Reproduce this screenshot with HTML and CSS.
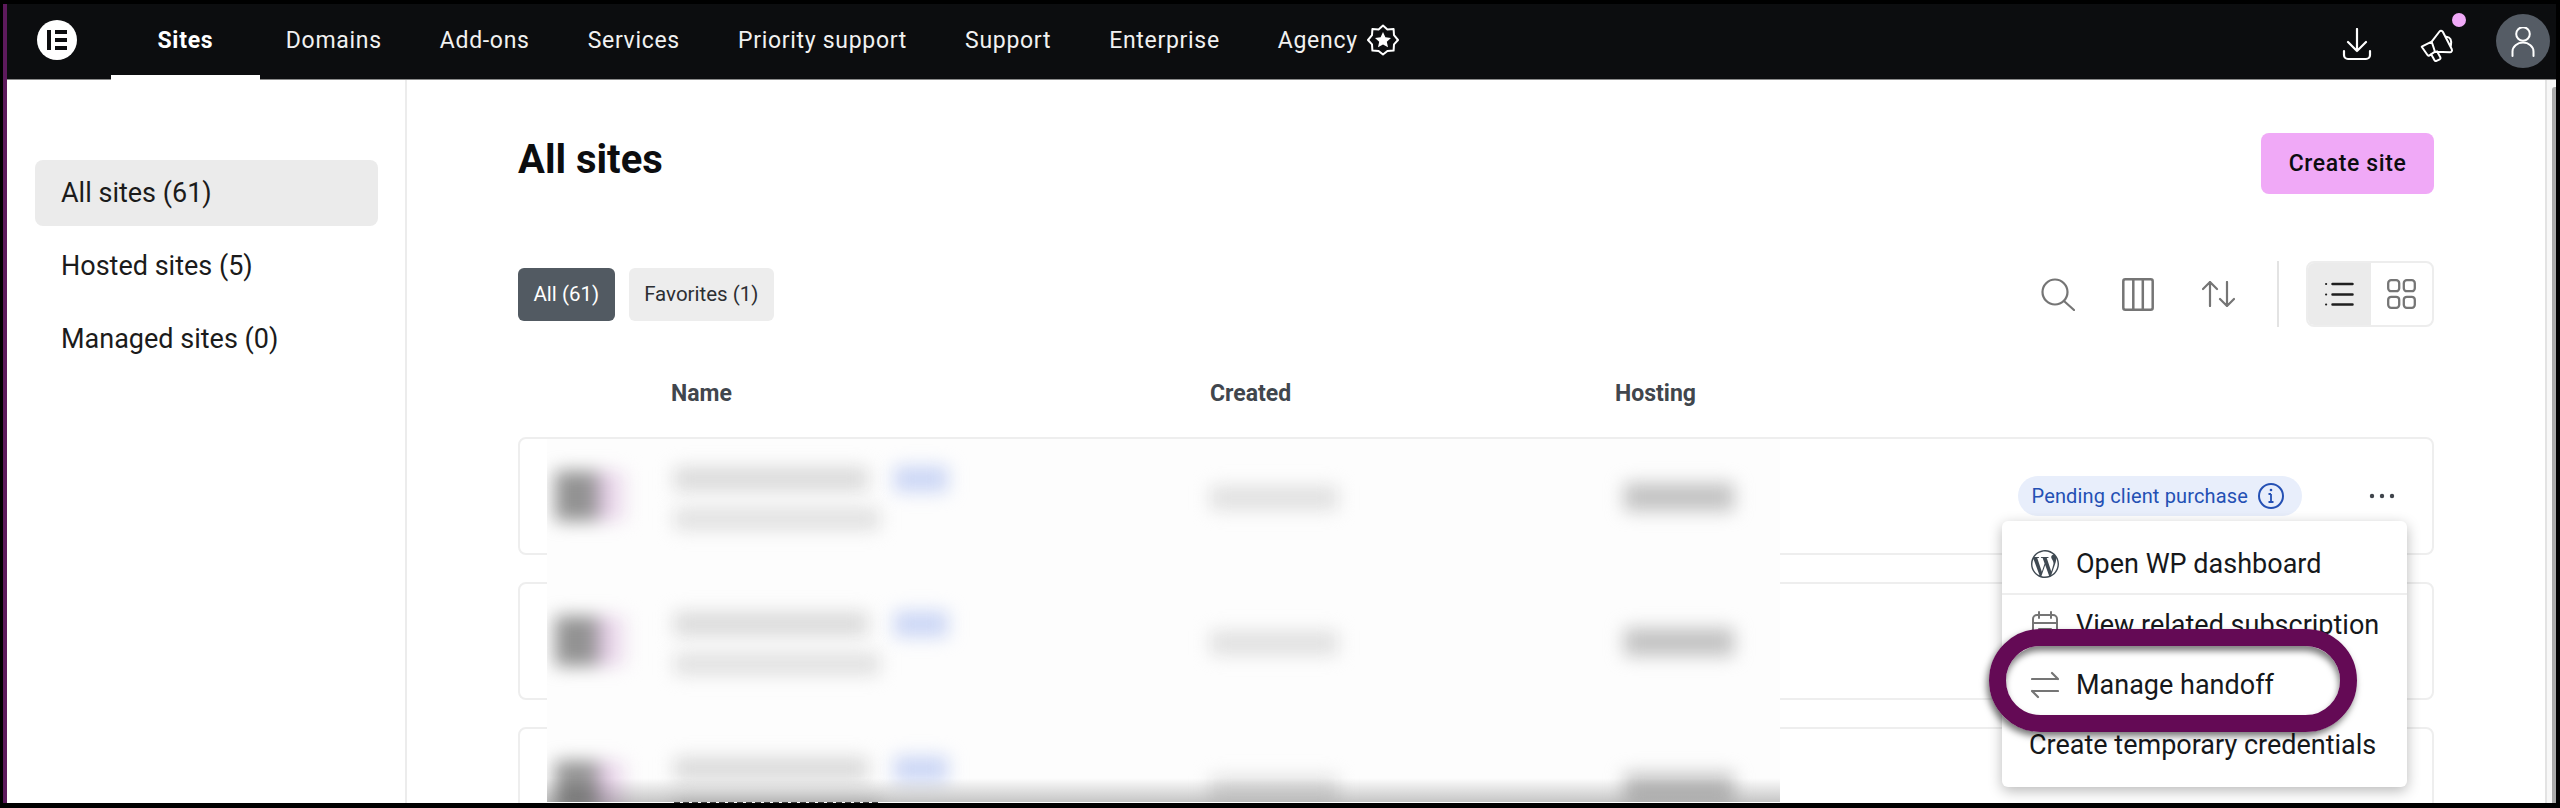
FILE: index.html
```html
<!DOCTYPE html>
<html lang="en">
<head>
<meta charset="utf-8">
<title>All sites</title>
<link rel="stylesheet" href="styles.css">
</head>
<body>
<div class="frame">
  <div class="window">
    <header class="nav">
      <svg class="logo" viewBox="0 0 40 40"><circle cx="20" cy="20" r="20" fill="#fff"/><path d="M10 10h4v20h-4zM18 10h12v4H18zM18 18h12v4H18zM18 26h12v4H18z" fill="#0c0d0f"/></svg>
      <nav class="tabs">
        <a class="tab active">Sites</a>
        <a class="tab">Domains</a>
        <a class="tab">Add-ons</a>
        <a class="tab">Services</a>
        <a class="tab">Priority support</a>
        <a class="tab">Support</a>
        <a class="tab">Enterprise</a>
        <a class="tab agency">Agency
          <svg class="star" viewBox="0 0 32 32"><path d="M16 1.500l4.400 3.900 6.200-.4.400 6.200 4 4.800-4 4.400-.4 6.200-6.200.4-4.400 3.500-4.400-3.500-6.200-.4-.4-6.200-4-4.400 4-4.800.4-6.200 6.200.4z" fill="none" stroke="#fff" stroke-width="2" stroke-linejoin="round"/><path d="M16 8l2.400 5.300 5.600.6-4.200 3.800 1.200 5.600-5-2.900-5 2.900 1.200-5.600L8 13.900l5.600-.6z" fill="#fff"/></svg>
        </a>
      </nav>
      <div class="nav-right">
        <svg class="ico-download" viewBox="0 0 31 33" fill="none" stroke="#fff" stroke-width="2.200" stroke-linecap="round" stroke-linejoin="round"><path d="M15 1v22M6 14l9 9 9-9M2 23v4a4 4 0 0 0 4 4h18a4 4 0 0 0 4-4v-4"/></svg>
        <span class="bell">
          <svg class="ico-mega" viewBox="0 0 36 36" fill="none" stroke="#fff" stroke-width="2" stroke-linecap="round" stroke-linejoin="round"><path d="M1.700 19.700L11.700 14.700 19.500 4.500c.8-1 2.600-.9 3.300.3l9 17.500c.6 1.300-.3 3-1.800 3L15 24.700 9.500 28.300c-.8.5-1.700.3-2.200-.5L1.700 19.700zM11.700 14.700L15 24.700M26.500 9.700c3.500.3 5.800 3.300 4.300 9.500M11 27l3.500 6.200c.4.800 1.300 1 2 .6l3.200-1.500c.8-.4 1-1.200.6-2L17 24.300"/></svg>
          <i class="dot"></i>
        </span>
        <span class="avatar">
          <svg viewBox="0 0 24 30" fill="none" stroke="#fff" stroke-width="2" stroke-linecap="round"><circle cx="12" cy="7" r="6.800"/><path d="M1.500 29v-4.500a10.500 9 0 0 1 21 0V29"/></svg>
        </span>
      </div>
    </header>
    <div class="body">
      <aside class="side">
        <a class="side-item current">All sites (61)</a>
        <a class="side-item">Hosted sites (5)</a>
        <a class="side-item">Managed sites (0)</a>
      </aside>
      <main class="main">
        <div class="head">
          <h1>All sites</h1>
          <button class="create">Create site</button>
        </div>
        <div class="toolbar">
          <div class="chips">
            <span class="chip on">All (61)</span>
            <span class="chip">Favorites (1)</span>
          </div>
          <div class="tools">
            <svg class="t-search" viewBox="0 0 34 33" fill="none" stroke="#757575" stroke-width="2.200" stroke-linecap="round"><circle cx="14" cy="14" r="12.500"/><path d="M23.500 23.500L33 32"/></svg>
            <svg class="t-cols" viewBox="0 0 32 33" fill="none" stroke="#757575" stroke-width="2.500" stroke-linejoin="round"><rect x="1.300" y="1.300" width="29.400" height="30.400" rx="2"/><path d="M11.300 1.300v30.400M20.800 1.300v30.400"/></svg>
            <svg class="t-sort" viewBox="0 0 33 26" fill="none" stroke="#757575" stroke-width="2.200" stroke-linecap="round" stroke-linejoin="round"><path d="M8 25V1M1 8l7-7 7 7M25 1v24M18 18l7 7 7-7"/></svg>
            <span class="sep"></span>
            <div class="toggle">
              <span class="seg on">
                <svg class="t-list" viewBox="0 0 29 24" fill="none" stroke="#1f1f1f" stroke-width="2.500" stroke-linecap="round"><path d="M7.500 2h20M7.500 12.500h20M7.500 22.500h20"/><path d="M1 2h.2M1 12.500h.2M1 22.500h.2" stroke-width="2"/></svg>
              </span>
              <span class="seg">
                <svg class="t-grid" viewBox="0 0 29 30" fill="none" stroke="#757575" stroke-width="2.300"><rect x="1.200" y="1.200" width="11" height="11" rx="3"/><rect x="16.800" y="1.200" width="11" height="11" rx="3"/><rect x="1.200" y="17.800" width="11" height="11" rx="3"/><rect x="16.800" y="17.800" width="11" height="11" rx="3"/></svg>
              </span>
            </div>
          </div>
        </div>
        <div class="thead">
          <span>Name</span>
          <span>Created</span>
          <span>Hosting</span>
        </div>
        <div class="rows">
          <div class="row">
            <span class="badge">Pending client purchase
              <svg class="info" viewBox="0 0 26 26" fill="none" stroke="#2450b4" stroke-width="2"><circle cx="13" cy="13" r="12"/><path d="M13 11v8M10.500 19h5M10.500 11H13" stroke-width="1.800"/><circle cx="13" cy="7" r="1.300" fill="#2450b4" stroke="none"/></svg>
            </span>
            <svg class="more" viewBox="0 0 44 8" fill="#3f444b"><circle cx="12" cy="4" r="2.200"/><circle cx="22" cy="4" r="2.200"/><circle cx="32" cy="4" r="2.200"/></svg>
          </div>
          <div class="row"></div>
          <div class="row"></div>
          <div class="blur-panel">
            <div class="blur-rows">
              <div class="blur-row">
                <i class="b-avatar"></i>
                <div class="b-name"><div class="b-title"><i class="b-t"></i><i class="b-tag"></i></div><i class="b-sub"></i></div>
                <i class="b-date"></i>
                <i class="b-host"></i>
              </div>
              <div class="blur-row">
                <i class="b-avatar"></i>
                <div class="b-name"><div class="b-title"><i class="b-t"></i><i class="b-tag"></i></div><i class="b-sub"></i></div>
                <i class="b-date"></i>
                <i class="b-host"></i>
              </div>
              <div class="blur-row">
                <i class="b-avatar"></i>
                <div class="b-name"><div class="b-title"><i class="b-t"></i><i class="b-tag"></i></div><i class="b-sub"></i></div>
                <i class="b-date"></i>
                <i class="b-host"></i>
              </div>
            </div>
            <div class="peek"></div>
          </div>
          <div class="menu">
            <div class="mi divided">
              <svg class="mi-ico" viewBox="0 0 24 24" fill="#3f4952"><path d="M21.469 6.825c.84 1.537 1.318 3.3 1.318 5.175 0 3.979-2.156 7.456-5.363 9.325l3.295-9.527c.615-1.54.82-2.771.82-3.864 0-.405-.026-.78-.07-1.11m-7.981.105c.647-.03 1.232-.105 1.232-.105.582-.075.514-.93-.067-.899 0 0-1.755.135-2.88.135-1.064 0-2.85-.15-2.85-.15-.585-.03-.661.855-.075.885 0 0 .54.061 1.125.09l1.68 4.605-2.37 7.08L5.354 6.9c.649-.03 1.234-.1 1.234-.1.585-.075.516-.93-.065-.896 0 0-1.746.138-2.874.138-.2 0-.438-.008-.69-.015C4.911 3.15 8.235 1.215 12 1.215c2.809 0 5.365 1.072 7.286 2.833-.046-.003-.091-.009-.141-.009-1.06 0-1.812.923-1.812 1.914 0 .89.513 1.643 1.06 2.531.411.72.89 1.643.89 2.977 0 .915-.354 1.994-.821 3.479l-1.075 3.585-3.9-11.61.001.014zM12 22.784c-1.059 0-2.081-.153-3.048-.437l3.237-9.406 3.315 9.087c.024.053.05.101.078.149-1.12.393-2.325.609-3.582.609M1.211 12c0-1.564.336-3.05.935-4.39L7.29 21.709C3.694 19.96 1.212 16.271 1.211 12M12 0C5.385 0 0 5.385 0 12s5.385 12 12 12 12-5.385 12-12S18.615 0 12 0"/></svg>
              <span>Open WP dashboard</span>
            </div>
            <div class="mi">
              <svg class="mi-ico" viewBox="0 0 28 28" fill="none" stroke="#757575" stroke-width="2" stroke-linecap="round"><rect x="2" y="4" width="24" height="22" rx="4"/><path d="M8 1v6M20 1v6M2 12h24M8 18h12"/></svg>
              <span>View related subscription</span>
            </div>
            <div class="mi">
              <svg class="mi-ico" viewBox="0 0 28 28" fill="none" stroke="#757575" stroke-width="2.200" stroke-linecap="round" stroke-linejoin="round"><path d="M1 8h26M21 2l6 6M1 20h26M1 20l6 6"/></svg>
              <span>Manage handoff</span>
            </div>
            <div class="mi plain"><span>Create temporary credentials</span></div>
            <div class="ring"></div>
          </div>
        </div>
      </main>
      <div class="scroll"><div class="thumb"></div></div>
    </div>
  </div>
</div>
</body>
</html>
```
FILE: styles.css
```css
* { box-sizing: border-box; }
html, body { margin: 0; height: 808px; overflow: hidden; background: #000; }
body { font-family: Roboto, "Liberation Sans", sans-serif; color: #111; }
.frame { height: 808px; padding: 4px 4px 5px 3px; }
.window { height: 100%; display: flex; flex-direction: column; border-left: 4px solid #5d1a5c; overflow: hidden; background: #fff; }

.nav { flex: 0 0 76px; display: flex; align-items: center; background: #0c0d0f; border-bottom: 1px solid #8a8a8a; padding-left: 30px; position: relative; }
.logo { width: 40px; height: 40px; flex: none; margin-top: -3px; }
.tabs { display: flex; height: 100%; margin-left: 34px; }
.tab { display: flex; align-items: center; padding: 0 29px 3px; color: #f1f1f1; font-size: 23px; letter-spacing: .7px; white-space: nowrap; position: relative; }
.tab.active { padding: 0 47px 3px 46.500px; font-weight: 700; color: #fff; letter-spacing: .7px; margin-right: -3.500px; }
.tab.active::after { content: ""; position: absolute; left: 0; right: 0; bottom: -1px; height: 5px; background: #fff; }
.agency { gap: 9px; }
.star { width: 32px; height: 32px; }
.nav-right { margin-left: auto; display: flex; align-items: center; padding-right: 6px; height: 100%; }
.ico-download { width: 31px; height: 33px; margin-top: 6px; }
.bell { position: relative; display: block; width: 36px; height: 36px; margin-left: 47px; margin-top: 6px; }
.ico-mega { width: 36px; height: 36px; display: block; }
.dot { position: absolute; right: -10px; top: -14px; width: 14px; height: 14px; border-radius: 50%; background: #f0a9f7; }
.avatar { width: 54px; height: 54px; border-radius: 50%; background: #555c65; margin-left: 40px; margin-top: -2px; display: flex; align-items: center; justify-content: center; }
.avatar svg { width: 24px; height: 30px; margin-top: 2px; }

.body { flex: 1; display: flex; min-height: 0; }
.side { flex: 0 0 400px; border-right: 2px solid #ececec; padding: 80px 27px 0 28px; display: flex; flex-direction: column; gap: 7px; }
.side-item { height: 66px; padding-left: 26px; display: flex; align-items: center; font-size: 27px; border-radius: 8px; color: #1b1b1b; }
.side-item.current { background: #ebebeb; }

.main { flex: 1; min-width: 0; padding: 53px 111px 0; overflow: hidden; }
.head { display: flex; justify-content: space-between; align-items: flex-start; }
h1 { margin: 2px 0 0; font-size: 40px; line-height: 50px; font-weight: 700; color: #0c0d0f; }
.create { width: 173px; height: 61px; border: 0; border-radius: 8px; background: #f0a9f7; font: 500 23px Roboto, sans-serif; letter-spacing: .6px; color: #0c0d0f; }

.toolbar { margin-top: 67px; height: 66px; display: flex; align-items: center; justify-content: space-between; }
.chips { display: flex; gap: 14px; }
.chip { height: 53px; padding: 0 15.500px; display: flex; align-items: center; font-size: 20.500px; border-radius: 6px; background: #ededed; color: #2c2f33; }
.chip.on { background: #525a62; color: #fff; }
.tools { display: flex; align-items: center; height: 100%; }
.t-search { width: 34px; height: 33px; margin-right: 47px; }
.t-cols { width: 32px; height: 33px; margin-right: 48px; }
.t-sort { width: 33px; height: 26px; margin-right: 42px; }
.sep { width: 2px; height: 66px; background: #e3e3e3; margin-right: 27px; }
.toggle { display: flex; width: 128px; height: 66px; border: 2px solid #ededed; border-radius: 8px; overflow: hidden; }
.seg { flex: 1; display: flex; align-items: center; justify-content: center; }
.seg.on { background: #ebebeb; flex: 0 0 63px; }
.t-list { width: 29px; height: 24px; }
.t-grid { width: 29px; height: 30px; }

.thead { display: grid; grid-template-columns: 539px 405px 1fr; padding: 50px 0 26px 153px; font-size: 23px; line-height: 34px; font-weight: 700; color: #41464d; }

.rows { position: relative; display: flex; flex-direction: column; gap: 27px; }
.row { flex: 0 0 118px; height: 118px; border: 2px solid #eeeeee; border-radius: 8px; display: flex; align-items: center; justify-content: flex-end; padding-right: 28px; gap: 58px; }
.badge { height: 40px; padding: 0 18px 0 14px; display: flex; align-items: center; gap: 10px; border-radius: 20px; background: #e8eefb; color: #2450b4; font-size: 20px; letter-spacing: .15px; white-space: nowrap; }
.info { width: 26px; height: 26px; }
.more { width: 44px; height: 8px; }

.blur-panel { position: absolute; left: 29px; top: 2px; width: 1233px; height: 365px; display: flex; flex-direction: column; }
.blur-rows { height: 363px; overflow: hidden; background: #fdfdfd; position: relative; }
.blur-rows::after { content: ""; position: absolute; left: 0; right: 0; bottom: 0; height: 24px; background: linear-gradient(rgba(0,0,0,0), rgba(0,0,0,.22)); }
.blur-row { height: 145px; display: grid; grid-template-columns: 127px 536px 414px 1fr; align-items: start; }
.blur-row i { display: block; }
.b-avatar { margin: 32px 0 0 8px; width: 72px; height: 50px; background: linear-gradient(90deg, #929292 0, #929292 52%, #e4cbe6 68%, #f3ecf3 100%); filter: blur(9px); }
.b-name { padding-top: 28px; }
.b-title { display: flex; gap: 26px; }
.b-t { width: 194px; height: 24px; background: #dadada; filter: blur(9px); }
.b-tag { width: 54px; height: 26px; margin-top: -1px; background: #cbd6f5; filter: blur(9px); }
.b-sub { margin-top: 16px; width: 206px; height: 22px; background: #e0e0e0; filter: blur(9px); }
.b-date { margin-top: 47px; width: 128px; height: 24px; background: #e0e0e0; filter: blur(9px); }
.b-host { margin-top: 44px; width: 110px; height: 28px; background: #c2c2c2; filter: blur(9px); }
.peek { height: 2px; margin-left: 127px; width: 206px; background: repeating-linear-gradient(90deg, #3c3c3c 0 6px, transparent 6px 9px); }

.menu { position: absolute; top: 84px; right: 27px; width: 405px; height: 266px; padding: 14px 0 12px; background: #fff; border-radius: 6px; box-shadow: 0 4px 14px rgba(0,0,0,.28); }
.mi { height: 60px; display: flex; align-items: center; gap: 17px; padding-left: 29px; font-size: 27px; color: #16181b; white-space: nowrap; }
.mi.divided { border-bottom: 2px solid #eeeeee; }
.mi.plain { padding-left: 27px; }
.mi-ico { width: 28px; height: 28px; flex: none; }
.ring { position: absolute; left: -13px; top: 108px; width: 368px; height: 103px; border: 17px solid #640a55; border-radius: 52px; box-shadow: -2px 4px 7px rgba(0,0,0,.55), inset -1px 5px 6px rgba(0,0,0,.5); }

.scroll { flex: 0 0 11px; border-left: 2px solid #e3e3e3; background: #f7f7f7; padding: 7px 0 0 5px; }
.thumb { height: 100%; background: #a9a9a9; border-radius: 3px 0 0 0; }
```
